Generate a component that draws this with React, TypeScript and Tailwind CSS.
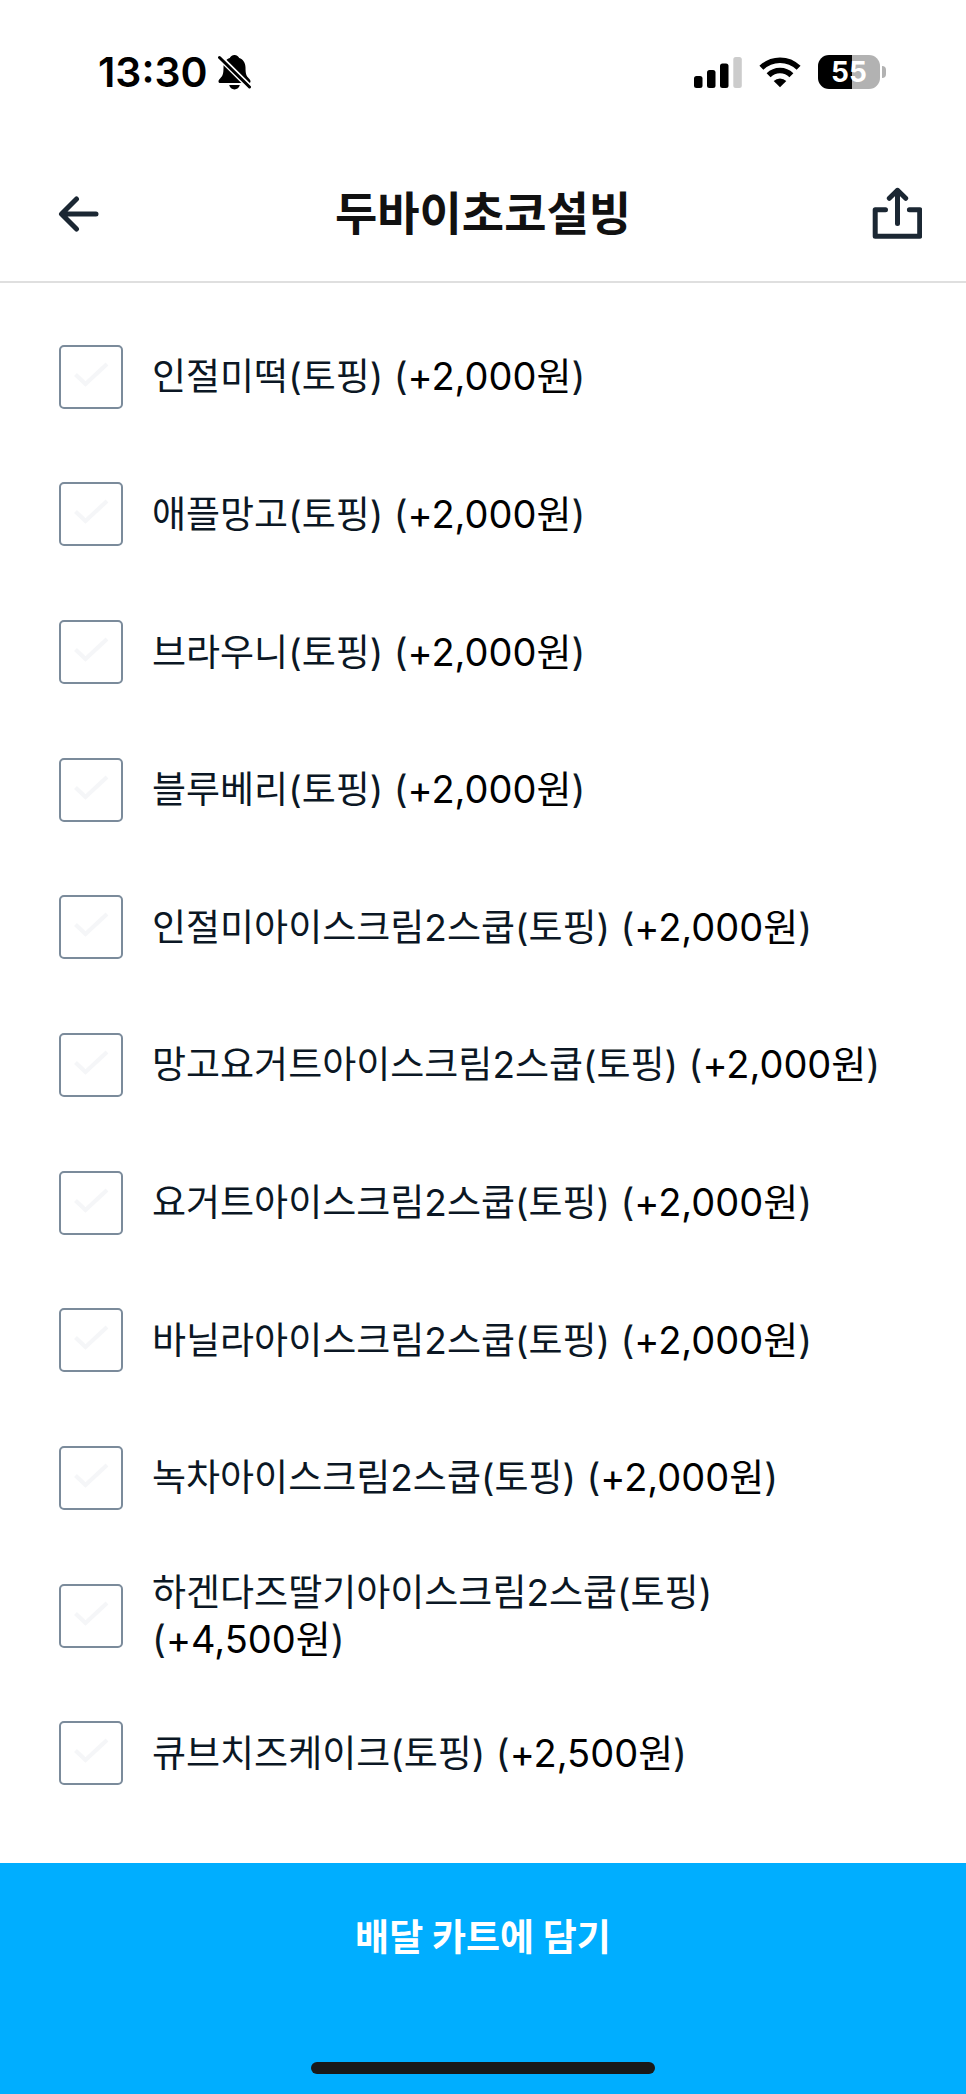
import { useState } from "react";

type Topping = {
  id: string;
  name: string;
  price: string;
};

const TOPPINGS: Topping[] = [
  { id: "injeolmi", name: "인절미떡(토핑)", price: "+2,000원" },
  { id: "apple-mango", name: "애플망고(토핑)", price: "+2,000원" },
  { id: "brownie", name: "브라우니(토핑)", price: "+2,000원" },
  { id: "blueberry", name: "블루베리(토핑)", price: "+2,000원" },
  { id: "injeolmi-ice", name: "인절미아이스크림2스쿱(토핑)", price: "+2,000원" },
  { id: "mango-yogurt-ice", name: "망고요거트아이스크림2스쿱(토핑)", price: "+2,000원" },
  { id: "yogurt-ice", name: "요거트아이스크림2스쿱(토핑)", price: "+2,000원" },
  { id: "vanilla-ice", name: "바닐라아이스크림2스쿱(토핑)", price: "+2,000원" },
  { id: "greentea-ice", name: "녹차아이스크림2스쿱(토핑)", price: "+2,000원" },
  { id: "haagen-strawberry", name: "하겐다즈딸기아이스크림2스쿱(토핑)", price: "+4,500원" },
  { id: "cube-cheesecake", name: "큐브치즈케이크(토핑)", price: "+2,500원" },
];

const BellOffIcon = () => (
  <svg viewBox="0 0 34 36" className="h-9 w-[34px]" aria-hidden="true">
    <path
      d="M16.5 1c-2.3 0-4.2 1.4-4.7 3.1C8 5.4 5.5 8.9 5.5 13.5c0 6-.8 8.5-3.2 10.7C.9 25.5.5 26.4.5 27.4c0 1 .8 1.6 2 1.6h28c1.2 0 2-.6 2-1.6 0-1-.4-1.9-1.8-3.2-2.4-2.2-3.2-4.7-3.2-10.7 0-4.6-2.5-8.1-6.3-9.4C20.7 2.4 18.8 1 16.5 1zM11.2 31h10.6c-.5 2.7-2.7 4.4-5.3 4.4s-4.8-1.7-5.3-4.4z"
      fill="#000"
    />
    <path d="M1 2.5 32 33.5" stroke="#fff" strokeWidth="6" />
    <path d="M1.5 3.5 31.5 33" stroke="#000" strokeWidth="3" strokeLinecap="round" />
  </svg>
);

const SignalIcon = () => (
  <svg viewBox="0 0 48 32" className="h-8 w-12" aria-hidden="true">
    <rect x="0" y="20" width="8.5" height="12" rx="2.5" />
    <rect x="13" y="14" width="8.5" height="18" rx="2.5" />
    <rect x="26" y="7.5" width="8.5" height="24.5" rx="2.5" />
    <rect x="39.3" y="1" width="8.5" height="31" rx="2.5" fill="#ccc" />
  </svg>
);

const WifiIcon = () => (
  <svg viewBox="0 0 42 32" className="h-8 w-[42px]" fill="none" stroke="#000" aria-hidden="true">
    <path d="M2.4 11.8a26.5 26.5 0 0 1 37.2 0" strokeWidth="5.6" />
    <path d="M9.6 19.2a16.2 16.2 0 0 1 22.8 0" strokeWidth="5.6" />
    <path d="M21 31.3 14.7 25a9 9 0 0 1 12.6 0z" fill="#000" stroke="none" />
  </svg>
);

const StatusBar = () => (
  <div className="flex h-[146px] shrink-0 items-center justify-between pr-20 pb-0.5 pl-[98px]">
    <div className="flex items-center gap-2.5">
      <time className="text-[41px] leading-none font-semibold text-black">13:30</time>
      <BellOffIcon />
    </div>
    <div className="flex items-center gap-[17px]">
      <SignalIcon />
      <WifiIcon />
      <div className="flex items-center gap-0.5">
        <div className="flex h-[34px] w-[62px] items-center justify-center rounded-[11px] bg-[linear-gradient(to_right,#000_55%,#b2b2b2_55%)] text-[28px] leading-none font-bold text-white">
          55
        </div>
        <div className="h-3 w-1 rounded-r-full bg-[#b2b2b2]" />
      </div>
    </div>
  </div>
);

const Header = () => (
  <header className="grid h-[137px] shrink-0 grid-cols-[1fr_auto_1fr] items-center border-b-2 border-[#dfdfdf] px-11 pb-0.5">
    <button type="button" aria-label="뒤로" className="justify-self-start px-3.5">
      <svg
        viewBox="0 0 42 38"
        className="h-[38px] w-[42px]"
        fill="none"
        stroke="#1b2733"
        strokeWidth="5"
        strokeLinecap="round"
        strokeLinejoin="round"
      >
        <path d="M18.5 5 3.5 20l15 15M4 20h34" />
      </svg>
    </button>
    <h1 className="text-[46px] leading-none font-bold text-[#111]">두바이초코설빙</h1>
    <button type="button" aria-label="공유" className="justify-self-end">
      <svg
        viewBox="0 0 50 52"
        className="h-[52px] w-[50px]"
        fill="none"
        stroke="#1b2733"
        strokeWidth="5"
        strokeLinecap="round"
        strokeLinejoin="round"
      >
        <path d="M13.5 22.8H3.2v26.5h44.5V22.8H37.4M25.5 36.5V3.3M17.3 11.3l8.2-8 8.2 8" />
      </svg>
    </button>
  </header>
);

const ToppingRow = ({
  topping,
  checked,
  onToggle,
}: {
  topping: Topping;
  checked: boolean;
  onToggle: () => void;
}) => (
  <li className="flex items-center">
    <label htmlFor={topping.id} className="flex items-center gap-[29px]">
      <span className="grid shrink-0">
        <input
          id={topping.id}
          type="checkbox"
          checked={checked}
          onChange={onToggle}
          className="peer col-start-1 row-start-1 size-16 appearance-none rounded-[5px] border-2 border-[#7b8b9b] bg-white checked:border-[#00aeff] checked:bg-[#00aeff]"
        />
        <svg
          viewBox="0 0 64 64"
          className="pointer-events-none col-start-1 row-start-1 size-16 text-[#f5f6f8] peer-checked:text-white"
          fill="none"
          stroke="currentColor"
          strokeWidth="4"
          aria-hidden="true"
        >
          <path d="m16.5 29.5 10 9.5 21.5-20" />
        </svg>
      </span>
      <span className="text-[37px] leading-[47px] break-keep text-[#0b1724]">
        {topping.name}{" "}
        <span className="text-[38px] whitespace-nowrap">
          (<span className="text-black">{topping.price}</span>)
        </span>
      </span>
    </label>
  </li>
);

export default function App() {
  const [selected, setSelected] = useState<string[]>([]);

  const toggle = (id: string) =>
    setSelected((prev) => (prev.includes(id) ? prev.filter((item) => item !== id) : [...prev, id]));

  return (
    <div
      lang="ko"
      className="flex min-h-screen flex-col bg-white font-[Inter,'Noto_Sans_CJK_KR',sans-serif]"
    >
      <StatusBar />
      <Header />
      <main className="flex flex-1 flex-col px-[59px] pt-[25px] pb-[41px]">
        <ul className="grid flex-1 auto-rows-fr">
          {TOPPINGS.map((topping) => (
            <ToppingRow
              key={topping.id}
              topping={topping}
              checked={selected.includes(topping.id)}
              onToggle={() => toggle(topping.id)}
            />
          ))}
        </ul>
      </main>
      <footer className="flex shrink-0 flex-col items-center bg-[#00aeff] pb-5">
        <button type="button" className="h-[148px] w-full text-[37px] leading-none font-bold text-white">
          배달 카트에 담기
        </button>
        <div className="mt-[51px] h-3 w-[344px] rounded-full bg-[#191919]" />
      </footer>
    </div>
  );
}
